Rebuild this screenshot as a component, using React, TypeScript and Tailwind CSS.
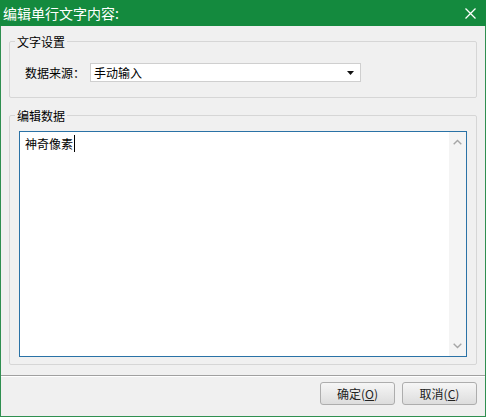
import React from "react";

const font = { fontFamily: '"Noto Sans CJK SC", "Microsoft YaHei", sans-serif' };

function Btn({ label, k }: { label: string; k: string }) {
  return (
    <button className="w-[75px] h-[23px] rounded-[3px] border border-[#adadad] bg-gradient-to-b from-[#f6f6f6] to-[#dddddd] text-[12px] leading-none text-[#222] flex items-center justify-center">
      {label}(<span className="underline">{k}</span>)
    </button>
  );
}

export default function App() {
  return (
    <div className="w-[486px] h-[417px] flex flex-col select-none" style={font}>
      <div className="h-[26px] bg-[#148a3e] flex items-center justify-between pl-[3px] pr-[10px] shrink-0">
        <span className="text-white text-[14px] leading-none">编辑单行文字内容:</span>
        <svg width="11" height="11" viewBox="0 0 11 11">
          <path d="M0.5 0.5 L10.5 10.5 M10.5 0.5 L0.5 10.5" stroke="white" strokeWidth="1.3" />
        </svg>
      </div>
      <div className="flex-1 flex flex-col bg-[#f0f0f0] border-x border-b border-[#2f8f50]">
        <div className="px-[8px] pt-[7px]">
          <fieldset className="border border-[#d6d6d6] rounded-[2px]">
            <legend className="ml-[5px] px-[2px] text-[12px] leading-[17px] text-black">文字设置</legend>
            <div className="flex items-center pl-[15px] pt-[13px] pb-[15px]">
              <span className="text-[12px] leading-none text-black w-[65px]">数据来源：</span>
              <div className="w-[271px] h-[19px] bg-white border border-[#cfcfcf] flex items-center justify-between pl-[3px] pr-[6px]">
                <span className="text-[12px] leading-none text-black">手动输入</span>
                <svg width="7" height="4" viewBox="0 0 7 4">
                  <path d="M0 0 H7 L3.5 4 Z" fill="#111" />
                </svg>
              </div>
            </div>
          </fieldset>
          <fieldset className="border border-[#d6d6d6] rounded-[2px] mt-[9px]">
            <legend className="ml-[5px] px-[2px] text-[12px] leading-[17px] text-black">编辑数据</legend>
            <div className="px-[9px] pt-[7px] pb-[7px]">
              <div className="h-[226px] bg-white border border-[#2a72a6] flex">
                <div className="flex-1 pl-[5px] pt-[4px] text-[12px] leading-[16px]">
                  <span className="text-[12px] leading-[16px] text-black border-r border-black pr-[1px]">神奇像素</span>
                </div>
                <div className="w-[17px] bg-[#f4f4f4] flex flex-col justify-between items-center py-[7px]">
                  <svg width="9" height="6" viewBox="0 0 9 6">
                    <path d="M0.7 5.3 L4.5 1.5 L8.3 5.3" stroke="#a6a6a6" strokeWidth="1.4" fill="none" />
                  </svg>
                  <svg width="9" height="6" viewBox="0 0 9 6">
                    <path d="M0.7 0.7 L4.5 4.5 L8.3 0.7" stroke="#a6a6a6" strokeWidth="1.4" fill="none" />
                  </svg>
                </div>
              </div>
            </div>
          </fieldset>
        </div>
        <div className="mt-[10px] border-t border-[#a0a0a0] border-b border-b-white" />
        <div className="flex justify-end gap-[7px] pt-[5px] pr-[8px]">
          <Btn label="确定" k="O" />
          <Btn label="取消" k="C" />
        </div>
      </div>
    </div>
  );
}
